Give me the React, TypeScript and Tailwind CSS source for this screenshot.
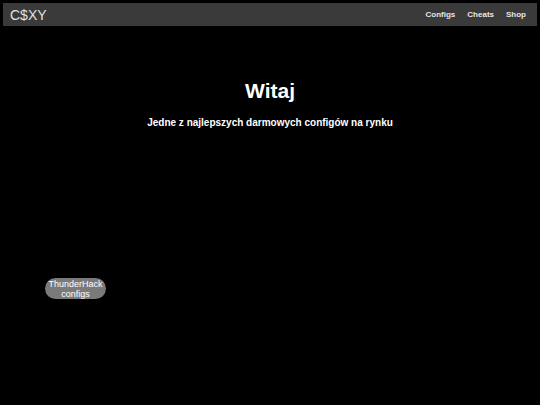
export default function App() {
  return (
    <div
      className="w-[540px] h-[405px] bg-black p-[3px] overflow-hidden"
      style={{ fontFamily: '"Liberation Sans", Arial, sans-serif' }}
    >
      <nav className="h-[23px] bg-[#3a3a3a] flex items-center justify-between pl-[7px] pr-[11px]">
        <span className="text-[14px] leading-none text-[#e0e0e0]">C$XY</span>
        <div className="flex gap-[12px] text-[8px] font-bold text-[#e6e6e6]">
          <span>Configs</span>
          <span>Cheats</span>
          <span>Shop</span>
        </div>
      </nav>
      <div className="flex flex-col items-center mt-[54px] text-white font-bold">
        <h1 className="text-[21px] leading-none">Witaj</h1>
        <p className="text-[10px] leading-none mt-[17px]">
          Jedne z najlepszych darmowych configów na rynku
        </p>
      </div>
      <div className="ml-[42px] mt-[150px] w-[61px] h-[21px] rounded-full bg-[#7a7a7a] flex flex-col items-center justify-center text-[9px] leading-[10px] text-white">
        <span>ThunderHack</span>
        <span>configs</span>
      </div>
    </div>
  );
}
